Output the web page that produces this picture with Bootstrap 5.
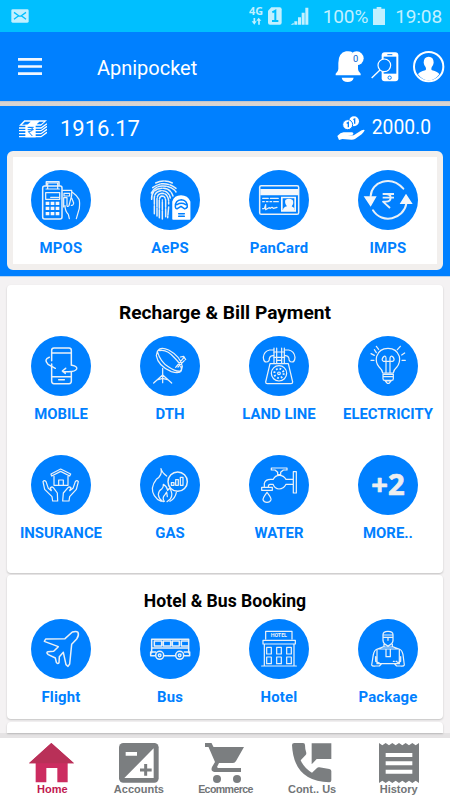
<!DOCTYPE html>
<html lang="en">
<head>
<meta charset="utf-8">
<meta name="viewport" content="width=device-width, initial-scale=1">
<title>Apnipocket</title>
<link href="https://cdn.jsdelivr.net/npm/bootstrap@5.3.0/dist/css/bootstrap.min.css" rel="stylesheet">
<style>
body{font-family:Roboto,"Open Sans",sans-serif;background:#f4f2f3;height:800px;overflow:hidden;line-height:1}
svg{display:block;flex:none}
.status-strip{height:32px;background:#00bfff;color:#c2f0ff;font-size:19px;padding:0 8px 0 11px}
.status-strip .level{margin-left:14px;letter-spacing:-.15px}
.status-strip .cell{margin:0 0 0 5px}
.status-strip .clock{margin-left:10px;letter-spacing:-.1px}
.app-header{height:69px;background:#0080ff;padding:0 5px 0 18px}
.app-title{font-size:20px;margin-left:55px;padding-top:2px;letter-spacing:-.02px}
.header-rule{height:5px;background:linear-gradient(#b9bfcb,#d8d4d2 35%,#d6d2cf)}
.wallet-zone{height:170px;background:#0080ff;padding:0 7px;box-shadow:0 1px 0 #b9d4ef}
.wallet-zone .balances{height:45px;padding:0 12px 0 12px}
.bal-main{font-size:22px;margin-left:13px}
.bal-side{font-size:19.3px;margin-left:7px;padding-bottom:1px}
.service-panel{border:6px solid #f2efed;border-radius:6px;height:119px;background:#fff;padding-top:13px}
.service-panel .row{margin:0 -6px}
.page-card{border:0;border-radius:4px;box-shadow:0 1px 2px rgba(0,0,0,.2);margin:0 7px;background:#fff}
.recharge{height:288px;margin-top:9px}
.booking{height:144px;margin-top:2px}
.next-card{height:11px;margin-top:3px;border-radius:4px 4px 0 0}
.section-title{font-size:19.15px;font-weight:700;color:#000;text-align:center;margin:0}
.recharge .section-title{padding-top:16px;height:51px}
.booking .section-title{font-size:17.6px;padding-top:16px;height:44px}
.row-tall{height:119px}
.tile{display:flex;flex-direction:column;align-items:center;color:#0080ff;font-size:14.9px;font-weight:700;white-space:nowrap;padding:0 1px 0 0;text-decoration:none}
.tile svg{width:60px;height:60px;border-radius:50%;background:#0080ff;margin-bottom:11px;fill:none;stroke:#e9f0f7;stroke-width:4.5;stroke-linejoin:round;stroke-linecap:round}
.tile .wide{letter-spacing:.2px}
.tile .solid{fill:#f5f7fa;stroke:none}
.tile .fine{stroke-width:3.7}
.tab-bar{height:67px;border-top:5px solid #e5e3e4;background:#fff;padding:0 7px 0 9px;font:700 11px "Liberation Sans",Arial,sans-serif;color:#727577}
.tab-bar a{color:inherit;text-decoration:none;width:86.6px;display:flex;flex-direction:column;align-items:center;padding-top:5px}
.tab-bar a.current{color:#c1184f}
.tab-bar .tight{letter-spacing:-.6px;font-size:10.6px}
</style>
<script src="https://cdn.jsdelivr.net/npm/bootstrap@5.3.0/dist/js/bootstrap.bundle.min.js"></script>
</head>
<body>
<div class="status-strip d-flex align-items-center">
  <svg width="18" height="14" viewBox="0 0 54 42"><rect x="1" y="1" width="52" height="40" rx="4" fill="#c2f0ff"/><path d="M9 10l14 10q4 3 8 0l14-10M9 31l13-10M45 31L32 21" fill="none" stroke="#00bfff" stroke-width="4"/></svg>
  <svg class="ms-auto" width="60" height="20" viewBox="75 17 180 60">
    <text x="75" y="43" font-family="Open Sans" font-weight="700" font-size="29" fill="#c2f0ff" textLength="42" lengthAdjust="spacingAndGlyphs">4G</text>
    <path d="M91 53v14M105 73V58" stroke="#c2f0ff" stroke-width="5"/><path d="M83 63h15l-7 10zM97 61h15l-8-9z" fill="#c2f0ff"/>
    <path d="M142 21h25q6 0 6 6v40q0 6-6 6h-29q-6 0-6-6V31z" fill="#c2f0ff"/><path d="M145 36l9-5v31M144 62h19" fill="none" stroke="#00bfff" stroke-width="6"/>
    <path d="M200 73l9-6v6zM211 63h9v10h-9zM222 51h9v22h-9zM233 37h9v36h-9zM244 22h9v51h-9z" fill="#c2f0ff"/>
  </svg>
  <span class="level">100%</span>
  <svg width="12" height="18" viewBox="0 0 36 54" class="cell"><path d="M11 0h14v5h11v49H0V5h11z" fill="#c2f0ff"/></svg>
  <span class="clock">19:08</span>
</div>
<header class="app-header d-flex align-items-center text-white">
  <svg width="24" height="17" viewBox="0 0 24 17"><path d="M0 1.4h24M0 8.5h24M0 15.6h24" stroke="#f1f7ff" stroke-width="2.7"/></svg>
  <span class="app-title">Apnipocket</span>
  <svg class="ms-auto" width="110" height="33" viewBox="328 149 330 99">
    <path d="M330 225v-5q8-6 8-14v-18q0-30 23-35 12-2 20 3a24 24 0 0 0 16 38v12q0 8 8 14v5zM348 232h36q-3 13-18 13t-18-13z" fill="#fff"/>
    <circle cx="393" cy="174" r="21" fill="#fff"/><text x="390" y="184" text-anchor="middle" font-family="Roboto" font-size="28" fill="#0060d0">0</text>
    <path d="M477 156h32q9 0 9 9v69q0 9-9 9h-32q-9 0-9-9v-69q0-9 9-9z" fill="#fff"/><path d="M474 169h38v51h-38z" fill="#0080ff"/><path d="M485 163h15" stroke="#0080ff" stroke-width="3"/><circle cx="492" cy="232" r="5" fill="none" stroke="#0080ff" stroke-width="3"/>
    <circle cx="476" cy="195" r="19" fill="#0080ff" stroke="#fff" stroke-width="3.5"/><path d="M463 209l-25 24" stroke="#fff" stroke-width="4"/>
    <circle cx="609" cy="199" r="44" fill="none" stroke="#fff" stroke-width="6"/><path d="M577 222q4-8 22-12 4-2 1-9-5-6-6-14 0-18 15-18t15 18q-1 8-6 14-3 7 1 9 18 4 22 12-13 18-32 18t-32-18z" fill="#fff"/>
  </svg>
</header>
<div class="header-rule"></div>
<section class="wallet-zone">
  <div class="balances d-flex align-items-center text-white">
    <svg width="28" height="18" viewBox="57 357 84 54"><path d="M73 358h68l-18 16H57z" fill="#fff"/><path d="M75 362h17l-10 9H66z" fill="#0080ff"/><path d="M118 362h14l-9 8h-13z" fill="#0080ff"/><path d="M57 381h66l18-13M57 389h66l18-13M57 398h66l18-13M57 407h66l18-13" fill="none" stroke="#fff" stroke-width="4"/><path d="M76 371h31v38H76z" fill="#fff"/><path d="M83 379h18M83 386h18M88 379q10 0 10 6t-13 7l12 13" fill="none" stroke="#0080ff" stroke-width="3"/></svg>
    <span class="bal-main">1916.17</span>
    <svg class="ms-auto" width="28" height="25" viewBox="337 342 84 75"><circle cx="388" cy="358" r="15" fill="#fff"/><circle cx="369" cy="368" r="15" fill="#fff" stroke="#0080ff" stroke-width="3"/><path d="M366 364l5-3v15M386 353l4-2v14" fill="none" stroke="#0080ff" stroke-width="4"/><path d="M338 402q10-12 20-11h24q8 3 1 8l-14 2 18-1 24-15q8-3 9 0-3 7-9 12l-20 14q-4 2-10 2l-28-2-10 3z" fill="#fff"/></svg>
    <span class="bal-side">2000.0</span>
  </div>
  <div class="service-panel"><div class="row g-0">
    <a class="col-3 tile"><svg viewBox="93 75 180 180"><path d="M139 120V110h38v10M134 123h47q5 0 5 6v87q0 6-6 6h-46q-6 0-6-6v-87q0-6 6-6z"/><path class="fine" d="M138 132h40M143 114h30v18M143 114v18M137 143h42v20h-42zM152 157h24"/><path d="M137 170h11v10h-11zm15 0h11v10h-11zm15 0h11v10h-11zM137 185h11v10h-11zm15 0h11v10h-11zm15 0h11v10h-11zM137 201h11v10h-11zm15 0h11v10h-11zm15 0h11v10h-11z" class="solid"/><path class="fine" d="M188 136h27v15l-8 31q-4 5-6 0v-24h-10v28M192 145h17v8h-17zM217 142q12 8 20 21 3 8 1 27l-9 31M215 159l6 15q-1 8-7 7M195 182q0 16 10 26l3 13"/></svg><span class="wide">MPOS</span></a>
    <a class="col-3 tile"><svg viewBox="420 75 180 180"><path stroke-dasharray="24 4" d="M467 114q25-12 50 0M458 128q33-25 70 2M454 144q8-19 32-21 29-1 42 18M455 163q-2-31 31-33 25-1 33 23M463 206V165q-2-25 20-28 22-2 28 22M471 213v-49q0-18 15-19 17 0 20 22v10M478 218v-52q0-12 8-13 10 0 11 14v50M487 222v-57M506 186l-3 32"/><path d="M519 222v-52q5-17 24-17t26 17v52z" fill="#fff" stroke="#fff"/><path d="M526 186q-1-21 18-22 18 1 18 22-4 6-9 5l-10-7-11 7q-5 1-6-5zM536 206h17M536 214h17M531 179q13-8 26 0" stroke="#0080ff"/></svg><span class="wide">AePS</span></a>
    <a class="col-3 tile"><svg viewBox="72 75 180 180"><rect x="104" y="122" width="117" height="86" rx="5"/><path class="solid" d="M106 132h114v19H106zM168 155h45v45h-45z"/><path d="M173 160h35v35h-35z" fill="#0080ff" stroke="none"/><path class="solid" d="M174 195q0-8 12-11-8-9-5-19 10-8 22 0 5 10-3 19l8 5v6z"/><path class="fine" d="M113 160h17m6 0h24M113 170h5m6 0h5m6 0h5m6 0h14M113 191h5l4-12v15l10-6 4 2 5-3 4 3 11-3"/></svg><span class="wide">PanCard</span></a>
    <a class="col-3 tile"><svg viewBox="400 75 180 180"><path stroke-width="6" d="M438 153c2-43 61-64 98-22M445 196c27 43 92 27 100-20"/><path class="solid" d="M417 154h39l-18 31zM525 177h39l-20-31z"/><path stroke-width="5.5" stroke-linecap="butt" d="M474 147h34M474 158h34M474 147h10q14 0 14 11t-14 12h-9l21 19"/></svg><span class="wide">IMPS</span></a>
  </div></div>
</section>
<main>
<section class="card page-card recharge">
  <h2 class="section-title">Recharge &amp; Bill Payment</h2>
  <div class="row g-0 row-tall">
    <a class="col-3 tile"><svg viewBox="93 138 180 180"><path d="M155 212v-31q0-7 7-7h45q7 0 7 7v45M214 247v27q0 7-7 7h-45q-7 0-7-7v-52M156 189h57M156 260h57M176 269h17"/><path d="M148 202q-18 6-4 21l22 12M216 226q17 3 14 11-4 8-24 8h-17M197 235l-10 8 9 7"/></svg><span>MOBILE</span></a>
    <a class="col-3 tile"><svg viewBox="420 138 180 180"><path class="fine" d="M472 184q9-16 34-4 35 19 41 49l-3 13q-5 10-30 3-40-17-45-48zM472 184q9 32 34 47 21 15 38 12M478 182q22-6 46 22 19 19 20 31M527 232l25-30M541 201l10-2 6 10M534 231l19-19M546 233q-2 14-17 14M488 235v43M487 256l-26 23M489 256l26 23M471 270l17-5 17 5"/></svg><span>DTH</span></a>
    <a class="col-3 tile"><svg viewBox="72 138 180 180"><path class="fine" d="M145 180h-11q-17 3-19 22 1 14 9 14 10-1 9-11 3-9 13-8M180 180h11q17 3 19 22-1 14-9 14-10-1-9-11-3-9-13-8M147 174v46M155 174v46M170 174v46M178 174v46M146 186h33M146 202h33M155 211h15M135 221h55l13 55q0 5-5 5h-71q-5 0-5-5z"/><circle class="fine" cx="162" cy="250" r="23"/><circle cx="162" cy="250" r="14" stroke-dasharray="5 6" stroke-width="6" stroke-linecap="butt"/><circle class="fine" cx="162" cy="250" r="4"/></svg><span>LAND LINE</span></a>
    <a class="col-3 tile"><svg viewBox="400 138 180 180"><path class="fine" d="M474 249q0-8-10-17-13-15-8-33 8-24 34-24t34 24q4 18-8 33-10 9-10 17zM475 253h31v13q0 5-5 5h-21q-5 0-5-5zM475 260h30M482 273h17l-6 7h-5zM484 247v-43q-1-9-8-3-7 9 0 13h28q8-4 1-13-7-6-9 3v43M449 179l6 9M462 178l-7-9M439 191l10 5M439 211h9M518 179l9-10M531 195l9-6M532 211h10"/></svg><span>ELECTRICITY</span></a>
  </div>
  <div class="row g-0">
    <a class="col-3 tile"><svg viewBox="93 45 180 180"><path class="fine" d="M153 102l29-15 30 15-3 6-27-14-27 14zM162 109v27h42v-27M176 135v-15h14v15M158 183l-2-13-22-22-5-23q4-6 9 0l7 20 9 7-3-9q5-4 9 0l12 16 1 24zM207 183l2-13 20-22 6-23q-4-6-9 0l-7 20-10 7 4-9q-5-4-9 0l-14 16-2 24z"/></svg><span>INSURANCE</span></a>
    <a class="col-3 tile"><svg viewBox="420 45 180 180"><path class="fine" d="M483 86q3 12 17 22M483 86q5 20-14 32-20 25-6 49 7 12 21 17M510 184q16-9 19-27M490 185q-14-8-15-22 1-11 10-16 6-6 5-14 11 7 13 18l6-7q12 19 2 33l-10 8M493 184q-8-10 2-20l5-8 2 14"/><circle cx="533" cy="125" r="29"/><path class="fine" d="M514 128h8v8h-8zM527 119h8v17h-8zM541 112h8v24h-8z"/></svg><span>GAS</span></a>
    <a class="col-3 tile"><svg viewBox="72 45 180 180"><path class="fine" d="M139 84h47v6h-11l-8 7v7h-9v-7l-8-7h-11zM118 141v-11q3-12 19-12h8q5-12 18-12t20 12h22v15h-22q-7 14-21 14-12 0-18-14h-9q-5 0-5 8M205 95h9v64h-9zM110 142h32v9h-32zM126 157q13 16 12 22-3 8-12 8t-12-8q0-6 12-22z"/></svg><span>WATER</span></a>
    <a class="col-3 tile"><svg viewBox="400 45 180 180"><text x="440" y="166" font-family="Open Sans" font-weight="700" font-size="86" textLength="100" lengthAdjust="spacingAndGlyphs" fill="#eceeef" stroke="#eceeef" stroke-width="2">+2</text></svg><span>MORE..</span></a>
  </div>
</section>
<section class="card page-card booking">
  <h2 class="section-title">Hotel &amp; Bus Booking</h2>
  <div class="row g-0">
    <a class="col-3 tile"><svg viewBox="93 162 180 180"><path d="M133 229l4-7 58-1 22-20q12-4 17 1 4 10-4 20l-15 16-6 59-5 7-6-5-8-37-12 13-1 18q-4 5-8-1l-3-13-21-10q-8-6-1-9l17-1 14-14z"/></svg><span class="wide">Flight</span></a>
    <a class="col-3 tile"><svg viewBox="420 162 180 180"><path d="M455 263v-40h111v40M455 249h111M463 228h22v15h-22zM490 228h22v15h-22zM517 228h21v15h-21zM544 228h22v15h-22zM466 272h-14v-11h15M492 272h34M553 261h16v11h-16"/><circle cx="479" cy="271" r="12"/><circle cx="479" cy="271" r="4"/><circle cx="539" cy="271" r="12"/><circle cx="539" cy="271" r="4"/></svg><span class="wide">Bus</span></a>
    <a class="col-3 tile"><svg viewBox="72 162 180 180"><path class="fine" d="M122 222v-23h79v23M114 226h97v11h-97zM118 237v64M207 237v64M110 303h104M125 247h14v20h-14zM155 247h14v20h-14zM185 247h14v20h-14zM125 276h14v20h-14zM155 276h14v20h-14zM185 276h14v20h-14z"/><text x="137" y="217" font-family="Roboto" font-size="16" font-weight="700" textLength="49" fill="#eef3f8" stroke="none">HOTEL</text></svg><span class="wide">Hotel</span></a>
    <a class="col-3 tile"><svg viewBox="400 162 180 180"><path class="fine" d="M475 209q0-10 15-10t15 10v18q-1 10-15 16-14-6-15-16zM475 210h30M477 217h27M490 218v8M478 237v9h25v-9M478 245l-20 7q-9 2-12 17l-5 31q2 5 12 3h11l6-6M503 245l20 7q9 2 12 17l4 31q-2 5-12 3h-11l-6-6M457 252h67v44h-67zM484 253v22h13v-22M453 275v14l11 5M528 275v14l-11 5M506 289h3M514 289h3"/></svg><span class="wide">Package</span></a>
  </div>
</section>
<div class="card page-card next-card"></div>
</main>
<nav class="tab-bar d-flex">
  <a class="current"><svg width="46" height="40" viewBox="90 130 138 120"><path d="M157 130l68 61h-19v57h-31v-43h-33v43h-32v-57H90z" fill="#cc2c60"/><path d="M157 130l68 61H90z" fill="#b93058"/></svg><span>Home</span></a>
  <a><svg width="40" height="40" viewBox="358 130 120 120"><rect x="358" y="130" width="119" height="119" rx="13" fill="#7b7e80"/><path d="M462 146v89h-88zM378 157h34v11h-34z" fill="#fff"/><path d="M421 211h35M438 193v35" stroke="#7b7e80" stroke-width="9"/></svg><span>Accounts</span></a>
  <a><svg width="40" height="40" viewBox="0 0 40 40"><path d="M0 0h6.5l2 4H39l-8 14q-1 2-3 2H14l-2 4 1 1h23v4H11q-6 0-4-5l3-5L3.5 4H0z" fill="#7b7e80"/><circle cx="12" cy="36" r="4" fill="#7b7e80"/><circle cx="32" cy="36" r="4" fill="#7b7e80"/></svg><span class="tight">Ecommerce</span></a>
  <a><svg width="40" height="40" viewBox="204 130 120 120"><path d="M211 130h26q6 0 6 6 0 14 4 24 0 4-2 6l-15 16q11 24 34 37l15-14q3-3 7-2l30 5q6 2 6 6v28q0 6-6 6-107-3-112-112 0-6 7-6zM263 131h59v47h-44l-15 16z" fill="#7b7e80"/></svg><span>Cont.. Us</span></a>
  <a><svg width="40" height="40" viewBox="463 130 120 120"><path d="M463 130l10 7 10-7 10 7 10-7 10 7 10-7 10 7 10-7 10 7 10-7 10 7 10-7v120l-10-7-10 7-10-7-10 7-10-7-10 7-10-7-10 7-10-7-10 7-10-7-10 7z" fill="#7b7e80"/><path d="M483 166h80M483 191h80M483 216h80" stroke="#fff" stroke-width="12"/></svg><span>History</span></a>
</nav>
</body>
</html>
